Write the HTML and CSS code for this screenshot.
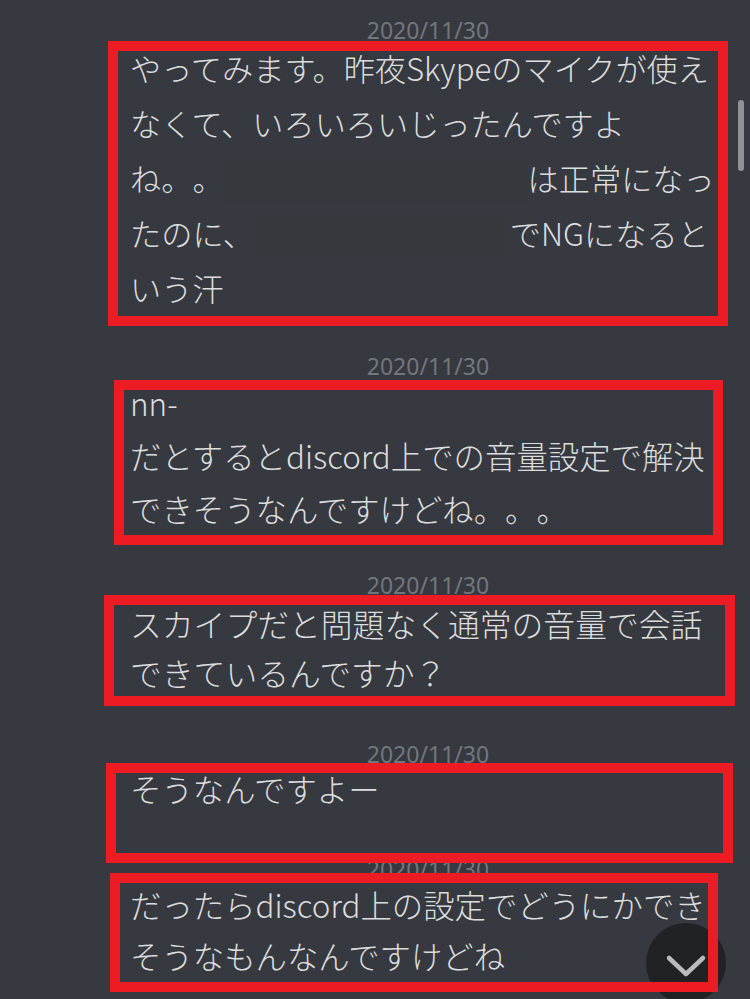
FILE: index.html
```html
<!DOCTYPE html>
<html lang="ja">
<head>
<meta charset="utf-8">
<title>chat</title>
<link rel="stylesheet" href="styles.css">
</head>
<body>
<div class="chat">
  <div class="msg msg-1">
    <div class="ts">2020/11/30</div>
    <div class="text">やってみます。昨夜Skypeのマイクが使え<br>なくて、いろいろいじったんですよ<br>ね。。<span class="redact redact-a"></span>は正常になっ<br>たのに、<span class="redact redact-b"></span>でNGになると<br>いう汗<span class="mark"></span></div>
  </div>
  <div class="msg msg-2">
    <div class="ts">2020/11/30</div>
    <div class="text">nn-<br>だとするとdiscord上での音量設定で解決<br>できそうなんですけどね。。。<span class="mark"></span></div>
  </div>
  <div class="msg msg-3">
    <div class="ts">2020/11/30</div>
    <div class="text">スカイプだと問題なく通常の音量で会話<br>できているんですか？<span class="mark"></span></div>
  </div>
  <div class="msg msg-4">
    <div class="ts">2020/11/30</div>
    <div class="text">そうなんですよー<span class="mark"></span></div>
  </div>
  <div class="msg msg-5">
    <div class="ts">2020/11/30</div>
    <div class="text">だったらdiscord上の設定でどうにかでき<br>そうなもんなんですけどね<span class="mark"></span></div>
  </div>
</div>
<div class="scroll-thumb"></div>
<div class="jump">
  <svg class="jump-icon" width="80" height="80" viewBox="0 0 80 80"><path d="M23 35 L40 51 L57 35" fill="none" stroke="#b9bbbe" stroke-width="4.5" stroke-linecap="round" stroke-linejoin="round"/></svg>
</div>
</body>
</html>
```
FILE: styles.css
```css
html, body {
  margin: 0;
  height: 100%;
  overflow: hidden;
  background: #36393f;
}
body {
  position: relative;
  font-family: "Noto Sans CJK JP Light", "Noto Sans CJK JP DemiLight", "Noto Sans CJK JP", "Noto Sans", sans-serif;
  font-weight: 300;
  color: #dcddde;
  text-spacing-trim: space-all;
}
.chat {
  padding: 20px 0 0 130px;
  width: 596px;
}
.ts {
  font-family: "Noto Sans", "Noto Sans CJK JP", sans-serif;
  font-weight: 400;
  font-size: 23px;
  line-height: 20px;
  color: #72767d;
  text-align: center;
}
.text {
  position: relative;
  font-size: 31px;
  white-space: nowrap;
}
.msg-1 .text { line-height: 55px; font-size: 31.2px; }
.msg-2 { margin-top: 41px; }
.msg-2 .text { line-height: 53px; font-size: 31.4px; }
.msg-3 { margin-top: 40px; }
.msg-3 .text { line-height: 49px; font-size: 31.8px; padding-top: 4px; }
.msg-4 { margin-top: 47px; }
.msg-4 .text { line-height: 50px; font-size: 31.4px; }
.msg-5 { margin-top: 45px; }
.msg-5 .text { line-height: 51px; font-size: 31.4px; }

.redact {
  display: inline-block;
  height: 44px;
  vertical-align: middle;
  background: #35383d;
}
.redact-a { width: 304px; }
.redact-b { width: 256px; }

.mark {
  position: absolute;
  box-sizing: border-box;
  border: 10px solid #ed1c24;
  z-index: 2;
}
.msg-1 .mark { top: 1px; left: -22px; width: 620px; height: 285px; }
.msg-2 .mark { top: 4px; left: -16px; width: 609px; height: 165px; }
.msg-3 .mark { top: 0; left: -26px; width: 631px; height: 111px; }
.msg-4 .mark { top: -1px; left: -24px; width: 627px; height: 100px; }
.msg-5 .mark { top: -6px; left: -20px; width: 608px; height: 119px; }

.scroll-thumb {
  position: absolute;
  left: 738px;
  top: 100px;
  width: 6px;
  height: 71px;
  border-radius: 3px;
  background: #909297;
}
.jump {
  position: absolute;
  left: 646px;
  top: 923px;
  width: 80px;
  height: 80px;
  border-radius: 50%;
  background: #202225;
  z-index: 1;
}
.jump-icon { display: block; }
```
